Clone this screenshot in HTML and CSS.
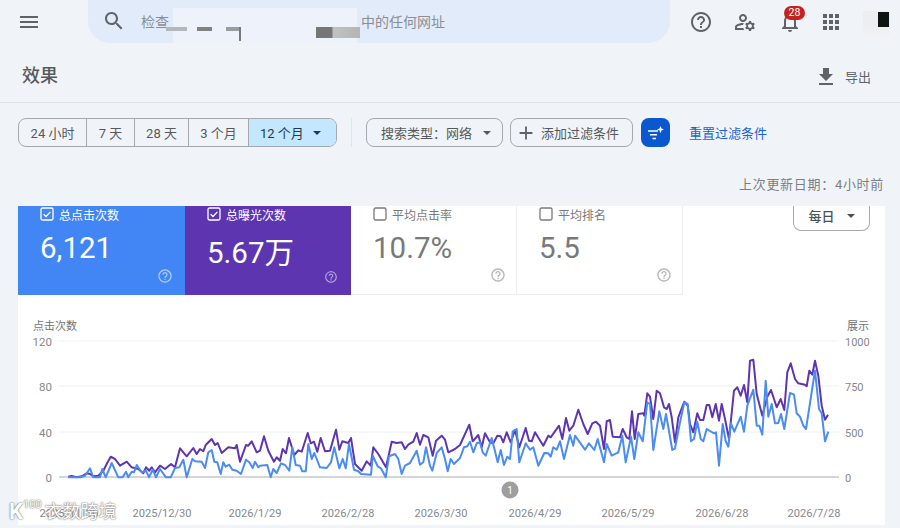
FILE: index.html
```html
<!DOCTYPE html>
<html lang="zh-CN">
<head>
    <meta charset="UTF-8">
    <meta name="viewport" content="width=device-width, initial-scale=1.0">
    <title>效果</title>
    <link rel="stylesheet" href="styles.css">
</head>
<body>
    <svg class="icon-defs" width="0" height="0">
        <symbol id="icon-help" viewBox="0 0 24 24"><path d="M11 18h2v-2h-2v2zm1-16C6.48 2 2 6.48 2 12s4.48 10 10 10 10-4.48 10-10S17.52 2 12 2zm0 18c-4.41 0-8-3.59-8-8s3.59-8 8-8 8 3.59 8 8-3.59 8-8 8zm0-14c-2.21 0-4 1.79-4 4h2c0-1.1.9-2 2-2s2 .9 2 2c0 2-3 1.75-3 5h2c0-2.25 3-2.5 3-5 0-2.21-1.79-4-4-4z"/></symbol>
        <symbol id="icon-checked" viewBox="0 0 14 14"><rect x="1" y="1" width="12" height="12" rx="1.5" fill="none" stroke="currentColor" stroke-width="1.3"/><path d="M3.6 7.2l2.4 2.3 4.4-4.6" fill="none" stroke="currentColor" stroke-width="1.3"/></symbol>
        <symbol id="icon-empty" viewBox="0 0 14 14"><rect x="1" y="1" width="12" height="12" rx="1.5" fill="none" stroke="currentColor" stroke-width="1.3"/></symbol>
    </svg>

    <header class="topbar">
        <svg class="icon menu-icon" viewBox="0 0 24 24"><path d="M3 18h18v-2H3v2zm0-5h18v-2H3v2zm0-7v2h18V6H3z"/></svg>
        <div class="search">
            <svg class="icon search-icon" viewBox="0 0 24 24"><path d="M15.5 14h-.79l-.28-.27C15.41 12.59 16 11.11 16 9.5 16 5.91 13.09 3 9.5 3S3 5.91 3 9.5 5.91 16 9.5 16c1.61 0 3.09-.59 4.23-1.57l.27.28v.79l5 4.99L20.49 19l-4.99-5zm-6 0C7.01 14 5 11.99 5 9.5S7.01 5 9.5 5 14 7.01 14 9.5 11.99 14 9.5 14z"/></svg>
            <span>检查</span>
            <span class="redacted">
                <i class="smear"></i>
                <i class="bar bar-a"></i>
                <i class="bar bar-b"></i>
                <i class="bar bar-c"></i>
                <i class="bar bar-d"></i>
                <i class="bar bar-e"></i>
            </span>
            <span>中的任何网址</span>
        </div>
        <svg class="icon top-help" viewBox="0 0 24 24"><use href="#icon-help"/></svg>
        <svg class="icon top-account" viewBox="0 0 24 24"><path d="M4 18v-.65c0-.34.16-.66.41-.81C6.1 15.53 8.03 15 10 15c.03 0 .05 0 .08.01.1-.7.3-1.37.59-1.98-.22-.02-.44-.03-.67-.03-2.42 0-4.68.67-6.61 1.82-.88.52-1.39 1.5-1.39 2.53V20h9.26c-.42-.6-.75-1.28-.97-2H4zM10 12c2.21 0 4-1.79 4-4s-1.79-4-4-4-4 1.79-4 4 1.79 4 4 4zm0-6c1.1 0 2 .9 2 2s-.9 2-2 2-2-.9-2-2 .9-2 2-2z"/><path d="M20.75 16c0-.22-.03-.42-.06-.63l1.14-1.01-1-1.73-1.45.49c-.32-.27-.68-.48-1.08-.63L18 11h-2l-.3 1.49c-.4.15-.76.36-1.08.63l-1.45-.49-1 1.73 1.14 1.01c-.03.21-.06.41-.06.63s.03.42.06.63l-1.14 1.01 1 1.73 1.45-.49c.32.27.68.48 1.08.63L16 21h2l.3-1.49c.4-.15.76-.36 1.08-.63l1.45.49 1-1.73-1.14-1.01c.03-.21.06-.41.06-.63zM17 18c-1.1 0-2-.9-2-2s.9-2 2-2 2 .9 2 2-.9 2-2 2z"/></svg>
        <div class="bell">
            <svg class="icon" viewBox="0 0 24 24"><path d="M12 22c1.1 0 2-.9 2-2h-4c0 1.1.89 2 2 2zm6-6v-5c0-3.07-1.64-5.64-4.5-6.32V4c0-.83-.67-1.5-1.5-1.5s-1.5.67-1.5 1.5v.68C7.63 5.36 6 7.92 6 11v5l-2 2v1h16v-1l-2-2zm-2 1H8v-6c0-2.48 1.51-4.5 4-4.5s4 2.02 4 4.5v6z"/></svg>
            <span class="badge">28</span>
        </div>
        <svg class="icon top-apps" viewBox="0 0 24 24"><path d="M4 8h4V4H4v4zm6 12h4v-4h-4v4zm-6 0h4v-4H4v4zm0-6h4v-4H4v4zm6 0h4v-4h-4v4zm6-10v4h4V4h-4zm-6 4h4V4h-4v4zm6 6h4v-4h-4v4zm0 6h4v-4h-4v4z"/></svg>
        <div class="avatar"><i></i></div>
    </header>

    <div class="title-row">
        <h1>效果</h1>
        <div class="export">
            <svg class="icon" viewBox="0 0 24 24"><path d="M19 9h-4V3H9v6H5l7 7 7-7zM5 18v2h14v-2H5z"/></svg>
            <span>导出</span>
        </div>
    </div>

    <div class="filters">
        <div class="ranges">
            <div class="range range-24h">24 小时</div>
            <div class="range range-7d">7 天</div>
            <div class="range range-28d">28 天</div>
            <div class="range range-3m">3 个月</div>
            <div class="range range-12m">12 个月<i class="caret"></i></div>
        </div>
        <div class="filter-sep"></div>
        <div class="chip chip-type">搜索类型：网络<i class="caret"></i></div>
        <div class="chip chip-add">
            <svg class="icon" viewBox="0 0 24 24"><path d="M19 13h-6v6h-2v-6H5v-2h6V5h2v6h6v2z"/></svg>
            添加过滤条件
        </div>
        <div class="spark-btn">
            <svg viewBox="0 0 20 20"><path d="M2 7.2h10v1.5H2zM4 11h7v1.5H4zM6.5 14.8h3.5v1.5H6.5z"/><path d="M14.5 3l1 2.6 2.5 1-2.5 1-1 2.6-1-2.6-2.5-1 2.5-1z"/></svg>
        </div>
        <div class="reset">重置过滤条件</div>
    </div>

    <div class="updated">上次更新日期：4小时前</div>

    <main class="card">
        <div class="tile-row">
            <div class="tile tile-clicks">
                <div class="tile-label"><svg class="check"><use href="#icon-checked"/></svg>总点击次数</div>
                <div class="tile-value">6,121</div>
                <svg class="tile-help"><use href="#icon-help"/></svg>
            </div>
            <div class="tile tile-views">
                <div class="tile-label"><svg class="check"><use href="#icon-checked"/></svg>总曝光次数</div>
                <div class="tile-value">5.67万</div>
                <svg class="tile-help"><use href="#icon-help"/></svg>
            </div>
            <div class="tile tile-plain">
                <div class="tile-label"><svg class="check"><use href="#icon-empty"/></svg>平均点击率</div>
                <div class="tile-value">10.7%</div>
                <svg class="tile-help"><use href="#icon-help"/></svg>
            </div>
            <div class="tile tile-plain">
                <div class="tile-label"><svg class="check"><use href="#icon-empty"/></svg>平均排名</div>
                <div class="tile-value">5.5</div>
                <svg class="tile-help"><use href="#icon-help"/></svg>
            </div>
            <div class="daily">每日<i class="caret"></i></div>
        </div>

        <svg class="chart" viewBox="18 296 867 230">
            <g class="grid">
                <line x1="59" x2="839" y1="342" y2="342"/>
                <line x1="59" x2="839" y1="387" y2="387"/>
                <line x1="59" x2="839" y1="433" y2="433"/>
                <line class="baseline" x1="59" x2="839" y1="478" y2="478"/>
            </g>
            <text class="axis-title" x="33" y="331">点击次数</text>
            <text class="axis-title" x="869" y="331" text-anchor="end">展示</text>
            <g class="axis" text-anchor="end">
                <text x="52" y="347">120</text>
                <text x="52" y="392">80</text>
                <text x="52" y="438">40</text>
                <text x="52" y="483">0</text>
            </g>
            <g class="axis axis-right">
                <text x="845" y="347">1000</text>
                <text x="845" y="392">750</text>
                <text x="845" y="438">500</text>
                <text x="845" y="483">0</text>
            </g>
            <g class="axis axis-dates" text-anchor="middle">
                <text x="69" y="518">2025/11/30</text>
                <text x="162" y="518">2025/12/30</text>
                <text x="255" y="518">2026/1/29</text>
                <text x="348" y="518">2026/2/28</text>
                <text x="441" y="518">2026/3/30</text>
                <text x="535" y="518">2026/4/29</text>
                <text x="628" y="518">2026/5/29</text>
                <text x="722" y="518">2026/6/28</text>
                <text x="814" y="518">2026/7/28</text>
            </g>
            <polyline class="line line-views" points="68.3,477.7 71.7,477 76.7,478.3 81.7,477.3 86.7,474.3 90,475 93.3,477.3 98.3,476.7 103.3,471.7 106.7,465 110.7,457.7 115,460 120,466.7 126.7,462.7 131.7,468.3 138.3,470 143.3,474.3 146,468.3 149.3,471.7 151.7,468.3 155,473.3 160,466.7 165,470 171,465 175,468.3 180,449.3 186.7,457.3 193.3,449 196.7,455 200,450 203.3,452.3 205.7,446 211.7,440 215,446 217.7,444 221.7,454 228.3,448.3 235,449.3 236.7,446 240,462.7 246,446 248.3,446.7 251.7,442.3 256.7,453.3 260,451.7 264,437.3 268.3,451.7 274,462.7 276.7,458.3 280,461.7 282.7,450 286,454.3 289,439 294.3,456 298.3,451.3 301.7,452.7 307.7,434 310.7,444.3 314,442.7 317.3,452.7 320.7,439 325,452.3 330,451.7 336,430.7 339.3,450.7 342.3,442.3 348.3,444 351,439 355,465 361.7,471.7 366.7,462.3 370.7,466.7 373.3,448.3 378.3,455 386,468.3 391.7,442.7 396.7,444 401.7,443.3 405,450 408.3,445.7 413.3,442.7 416.7,434 420,445.7 423.3,436 428.3,438.3 432.7,456.7 436,441.7 441.7,436.7 445,440.7 448.3,453.3 455,450 460,446 469.3,425.7 472.7,442.3 478.3,436 481.7,448.3 485,434.3 490,443.3 493.3,444.3 497.3,436.7 500.7,437.3 503.3,443.3 506.7,433.3 510.7,443.3 515,431 519.3,448.3 525.7,429 529,441.7 531.7,442.3 535,433.3 543.3,446.7 548.3,436.7 550.7,438.3 559,426.7 562.3,440 566,419 569.3,431.7 573.3,426.7 578.3,410.7 583.3,425 587.7,435 592.3,424.3 596,422.7 600,426.7 604,450 606.7,422.3 610,421 612.7,437.7 620,438.3 622.7,430 626.7,438.3 629.3,440 632,412.3 634.7,440 638.3,415 643.3,414.3 644.3,416.7 647.3,394.3 650,397.7 653.3,420 656.7,391.7 660,394.3 664,408.3 666.7,410 669,405 671.7,418.3 675,443.3 678.3,418.3 684.3,402.7 687.7,406.7 690,425 693.3,433.3 697.3,414.3 700,421 703.3,421 706.7,406 709.3,406 712.3,418.3 715.7,405 719,421.7 721.7,405 725,420 729,440 734,391.7 737.3,388.3 740.7,396.7 744,386 747.3,403.3 750,361.7 753.3,360.7 756.7,395 762.3,416.7 767.3,397.7 771,391 776.7,408.3 780.7,400 784.3,411 787.3,373.3 790.7,364.3 795,380 798.3,384.3 805,385.7 806.7,387.3 809.3,371.7 812.3,375.7 815,361.7 818.3,376.7 821.7,406.7 825,420.7 828,415.7"/>
            <polyline class="line line-clicks" points="68.3,478.3 80,478.3 85,476.7 90,469.3 93.3,478.3 100,478.3 102.3,470 105.7,478.3 111.7,464 118.3,478.3 122.7,478.3 126,472.7 128.3,478.3 131.7,472.7 134,473.3 136.7,466 141.7,473.3 146,471.7 149,478.3 152.7,470.7 156,478.3 160,470 166,478.3 170.7,478.3 175,469 179.3,468.3 183.3,460.7 186.7,478.3 192.3,460 195,462.3 201.7,462.7 205,469 208.3,453.3 211.7,451 214.3,462.7 217.3,463.3 220.7,475 223.3,463.3 225.7,467.7 229.3,465.7 232.3,470.7 236.7,471.7 241,475 246,460.7 249.3,463.3 252.7,469 255,462.7 258.3,468.3 260,466.7 267.3,466 270.7,478.3 273.3,470 276.7,474 281,464.3 285,466 289.3,471.7 292.3,448.3 295.7,466 300,466.7 302.3,472.3 305.7,472.3 308.3,445 311.7,460 314.3,454 320,468.3 326.7,469 331,463.3 334.3,448.3 339.3,469.3 342.7,460 345.7,469.3 349,445 354,470.7 358.3,472.3 361,475 371,475.7 372.7,456.7 377.7,467.3 381,469.3 385.7,478.3 389,457.3 395,455 398.3,460 401.7,475 405,466.7 410,464 416.7,451.7 420,465.7 423.3,463.3 426,448.3 430,466.7 432.3,471.7 436.7,454 441.7,448.3 445,460 447.7,472.3 450.7,460 454,465 460,459 464,448.3 467.3,447.3 470,442.7 473.3,453.3 476.7,444.3 480,443.3 482.7,453.3 485.7,456.7 491.7,439 497.7,463.3 500.7,451 504,466 507.3,457.7 510,460 512.7,432.3 516.7,430 519.3,463.3 525.7,444.3 530,450.7 533.3,448.3 538.3,466.7 544.3,454 548.3,454.3 550.7,457.7 553.3,448.3 556.7,450.7 560,442.3 564,460 570,436 573.3,446.7 575,436.7 585,450.7 589,444.3 594.3,451 597.7,440 604,463.3 606.7,445 611.7,456.7 618.3,453.3 622.3,436.7 625.7,463.3 631,437.7 634.3,460 638.3,433.3 642.7,442.3 647.3,403.3 650,405 653.3,451 659.3,412.3 663.3,430 666,415 672.3,451 675,449.3 679.3,426.7 684.3,403.3 687.7,405 691,442.3 694,440 697.3,422.7 700.7,440 703.3,442.3 706.7,430 714,434.3 716,433.3 719,466.7 722.7,425 725.7,442.3 728.3,447.7 731,424.3 734.3,432.7 740.7,417.7 744,432.7 747.3,406.7 753.3,390.7 756.7,426.7 759.3,426.7 762.3,435.7 765.7,381.7 768.3,417.7 771.7,405 775,424.3 778.3,424 781,415 784.3,430 790,394 794,395.7 796.7,414.3 800,417.7 803.3,426.7 806,430 815,371.7 819,410 821.7,414.3 825,442.3 828.3,432.7"/>
            <circle class="marker" cx="510" cy="491" r="8.5"/>
            <text class="marker-text" x="510" y="494.5" text-anchor="middle">1</text>
        </svg>
    </main>

    <!-- watermark over the bottom left corner -->
    <div class="watermark">
        <span class="wm-logo">K<sup>100</sup></span>
        <span>衣数跨境</span>
    </div>
</body>
</html>
```

FILE: styles.css
```css
body {
    margin: 0;
    width: 900px;
    height: 528px;
    overflow: hidden;
    position: relative;
    background: #f0f4f9;
    color: #5f6368;
    font-family: Roboto, "Noto Sans CJK SC", sans-serif;
    font-size: 13px;
}
.icon-defs {
    position: absolute;
}
.icon {
    width: 24px;
    height: 24px;
    fill: #5f6368;
    flex: none;
    display: block;
}

/* top bar */
.topbar {
    height: 43px;
    display: flex;
    align-items: center;
    padding-left: 17px;
}
.search {
    width: 582px;
    height: 43px;
    margin-left: 47px;
    margin-right: 19px;
    padding-left: 14px;
    padding-bottom: 2px;
    box-sizing: border-box;
    border-radius: 0 0 22px 22px;
    background: #e2ebfa;
    display: flex;
    align-items: center;
    font-size: 14px;
    color: #8a8f94;
}
.search-icon {
    margin-right: 15px;
}
.redacted {
    width: 192px;
    height: 43px;
    position: relative;
    top: 1px;
    filter: blur(0.6px);
}
.smear {
    position: absolute;
    left: 4px;
    top: 8px;
    width: 184px;
    height: 35px;
    background: #eef3fb;
}
.bar {
    position: absolute;
    background: #9a9d9f;
}
.bar-a { left: -3px; top: 27px; width: 21px; height: 4px; background: #b4b8bc; }
.bar-b { left: 28px; top: 27px; width: 15px; height: 4px; background: #7f8182; }
.bar-c { left: 57px; top: 27px; width: 15px; height: 4px; background: #9a9d9f; }
.bar-d { left: 70px; top: 27px; width: 2px; height: 14px; background: #77797a; }
.bar-e { left: 147px; top: 27px; width: 44px; height: 11px; background: linear-gradient(90deg, #767675 35%, #c0c2c2 40%, #b4b6b6); }
.top-account {
    margin-left: 20px;
}
.bell {
    margin-left: 21px;
    position: relative;
}
.badge {
    position: absolute;
    left: 6px;
    top: -4px;
    width: 21px;
    height: 14px;
    border-radius: 7px;
    background: #c5221f;
    color: #fff;
    font-size: 10.5px;
    line-height: 14px;
    text-align: center;
}
.top-apps {
    margin-left: 17px;
}
.avatar {
    width: 27px;
    height: 28px;
    margin-left: 20px;
    margin-top: 6px;
    background: linear-gradient(#edeef0 55%, #f2f4f8);
    display: flex;
    justify-content: flex-end;
    align-items: flex-start;
}
.avatar i {
    width: 11px;
    height: 15px;
    margin: 1px 1px 0 0;
    background: #0e1412;
}

/* title row */
.title-row {
    height: 59px;
    border-bottom: 1px solid #dfe2e6;
    display: flex;
    align-items: center;
    justify-content: space-between;
    padding: 0 29px 0 22px;
}
.title-row h1 {
    margin: 2px 0 0;
    font-size: 18px;
    font-weight: 500;
    color: #55595c;
}
.export {
    display: flex;
    align-items: center;
    gap: 7px;
    margin-top: 8px;
}

/* filters */
.filters {
    height: 29px;
    margin-top: 15px;
    padding-left: 18px;
    display: flex;
    align-items: center;
    color: #55595c;
}
.ranges {
    width: 319px;
    height: 29px;
    box-sizing: border-box;
    display: flex;
    border: 1px solid #a5a9ad;
    border-radius: 8px;
    overflow: hidden;
}
.range {
    box-sizing: border-box;
    border-right: 1px solid #a5a9ad;
    display: flex;
    align-items: center;
    justify-content: center;
}
.range-24h { width: 68px; }
.range-7d { width: 48px; }
.range-28d { width: 54px; }
.range-3m { width: 60px; }
.range-12m {
    flex: 1;
    border-right: none;
    background: #c2e7ff;
    color: #1f3a52;
    justify-content: flex-start;
    padding-left: 11px;
}
.caret {
    width: 0;
    height: 0;
    border-left: 4px solid transparent;
    border-right: 4px solid transparent;
    border-top: 4px solid currentColor;
    display: block;
}
.range-12m .caret {
    margin-left: 9px;
}
.filter-sep {
    width: 1px;
    height: 29px;
    margin: 0 14px;
    background: #e1e4e8;
}
.chip {
    height: 29px;
    box-sizing: border-box;
    border: 1px solid #a5a9ad;
    border-radius: 8px;
    display: flex;
    align-items: center;
}
.chip-type {
    width: 137px;
    padding-left: 14px;
}
.chip-type .caret {
    margin-left: 11px;
}
.chip-add {
    width: 123px;
    margin-left: 7px;
    padding-left: 4px;
}
.chip-add .icon {
    width: 22px;
    height: 22px;
    margin-right: 4px;
}
.spark-btn {
    width: 29px;
    height: 29px;
    margin-left: 8px;
    border-radius: 8px;
    background: #0b57d0;
    display: flex;
    align-items: center;
    justify-content: center;
}
.spark-btn svg {
    width: 20px;
    height: 20px;
    fill: #fff;
}
.reset {
    margin-left: 19px;
    color: #1a62d6;
}

.updated {
    height: 45px;
    padding-top: 14px;
    padding-right: 16px;
    display: flex;
    align-items: center;
    justify-content: flex-end;
    letter-spacing: 0.7px;
    color: #7a7e82;
}

/* card */
.card {
    width: 867px;
    height: 319px;
    margin-left: 18px;
    background: #fff;
    overflow: hidden;
}
.tile-row {
    height: 89px;
    display: flex;
}
.tile {
    width: 166px;
    box-sizing: border-box;
    padding: 1px 12px 11px 22px;
    display: flex;
    flex-direction: column;
    color: #fff;
}
.tile-clicks {
    width: 167px;
    background: #4285f4;
}
.tile-views {
    background: #5e35b1;
}
.tile-plain {
    padding-right: 10px;
    color: #77797b;
    border-bottom: 1px solid #eceef0;
    border-right: 1px solid #eceef0;
}
.tile-label {
    display: flex;
    align-items: center;
    gap: 5px;
    height: 14px;
    font-size: 12px;
}
.tile-label .check {
    width: 14px;
    height: 14px;
    flex: none;
}
.tile-value {
    margin-top: 10px;
    font-size: 29.5px;
    line-height: 34px;
}
.tile-views .tile-value {
    margin-top: 15px;
}
.tile-help {
    width: 16px;
    height: 16px;
    margin-top: auto;
    align-self: flex-end;
    fill: currentColor;
    opacity: 0.55;
}
.daily {
    width: 77px;
    height: 25px;
    margin-left: auto;
    margin-right: 15px;
    padding-bottom: 5px;
    box-sizing: border-box;
    border: 1px solid #a5a9ad;
    border-top: none;
    border-radius: 0 0 8px 8px;
    display: flex;
    align-items: center;
    justify-content: center;
    gap: 12px;
    color: #4d5155;
    font-weight: 500;
}

/* chart */
.chart {
    display: block;
    width: 867px;
    height: 230px;
}
.grid line {
    stroke: #eeeff1;
    stroke-width: 1;
}
.grid .baseline {
    stroke: #a9abad;
}
.axis text {
    font-size: 11.5px;
    fill: #85888b;
}
.axis-right text {
    font-size: 11px;
}
.axis-dates text {
    font-size: 11.1px;
}
.axis-title {
    font-size: 11px;
    fill: #6f7276;
}
.line {
    fill: none;
    stroke-width: 2;
    stroke-linejoin: round;
}
.line-views {
    stroke: #5e35b1;
}
.line-clicks {
    stroke: #4a8cf2;
}
.marker {
    fill: #9e9e9e;
}
.marker-text {
    font-size: 10px;
    fill: #fff;
}

/* watermark */
.watermark {
    position: absolute;
    left: 9px;
    bottom: 6px;
    display: flex;
    align-items: flex-end;
    gap: 3px;
    font-size: 18px;
    line-height: 20px;
    color: #fff;
    text-shadow: 0 0 1px #6f6f6f, 0 0 2px #6f6f6f;
}
.wm-logo {
    font-weight: 700;
    font-size: 22px;
}
.wm-logo sup {
    font-size: 11px;
    font-weight: 400;
    line-height: 0;
    vertical-align: 11px;
}
```
